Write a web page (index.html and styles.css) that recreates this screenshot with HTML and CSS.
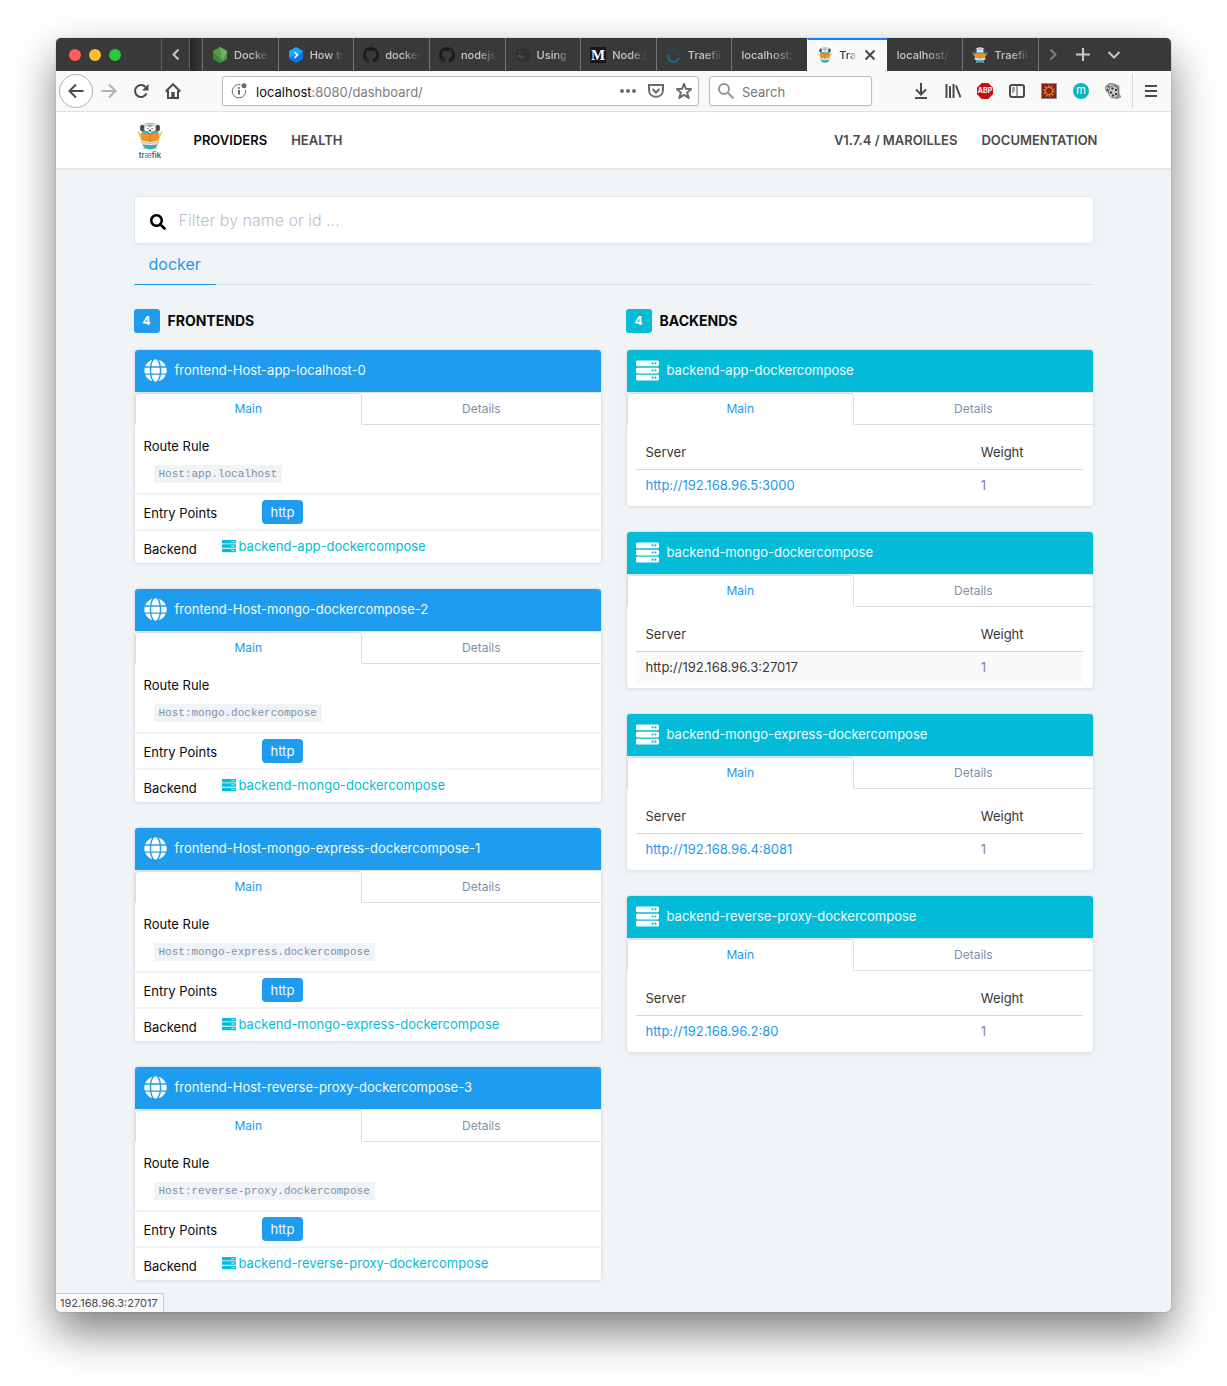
FILE: index.html
```html
<!DOCTYPE html>
<html lang="en">
<head>
<meta charset="utf-8">
<title>Traefik</title>
<link rel="stylesheet" href="styles.css">
</head>
<body>
<svg class="sprite" aria-hidden="true">
  <symbol id="globe" viewBox="0 0 496 512"><path d="M336.500 160C322 70.700 287.800 8 248 8s-74 62.700-88.500 152h177zM152 256c0 22.200 1.200 43.500 3.300 64h185.300c2.100-20.500 3.300-41.800 3.300-64s-1.200-43.500-3.300-64H155.300c-2.100 20.500-3.300 41.800-3.300 64zm324.700-96c-28.600-67.900-86.500-120.400-158-141.600 24.400 33.800 41.200 84.700 50 141.600h108zM177.200 18.400C105.800 39.600 47.800 92.100 19.300 160h108c8.700-56.900 25.500-107.800 49.900-141.600zM487.400 192H372.700c2.100 21 3.300 42.500 3.300 64s-1.200 43-3.300 64h114.600c5.500-20.500 8.600-41.800 8.600-64s-3.100-43.500-8.500-64zM120 256c0-21.500 1.200-43 3.300-64H8.600C3.200 212.500 0 233.800 0 256s3.200 43.500 8.600 64h114.600c-2-21-3.200-42.500-3.200-64zm39.500 96c14.500 89.300 48.700 152 88.500 152s74-62.700 88.500-152h-177zm159.300 141.600c71.400-21.200 129.400-73.700 158-141.600h-108c-8.800 56.900-25.600 107.800-50 141.600zM19.300 352c28.600 67.900 86.500 120.400 158 141.600-24.400-33.800-41.200-84.700-50-141.600h-108z"/></symbol>
  <symbol id="server" viewBox="0 0 512 512"><path fill-rule="evenodd" d="M32 32h448a32 32 0 0 1 32 32v64a32 32 0 0 1-32 32H32a32 32 0 0 1-32-32V64a32 32 0 0 1 32-32zM32 192h448a32 32 0 0 1 32 32v64a32 32 0 0 1-32 32H32a32 32 0 0 1-32-32v-64a32 32 0 0 1 32-32zM32 352h448a32 32 0 0 1 32 32v64a32 32 0 0 1-32 32H32a32 32 0 0 1-32-32v-64a32 32 0 0 1 32-32zM432 72a24 24 0 1 0 0 48 24 24 0 0 0 0-48zM368 72a24 24 0 1 0 0 48 24 24 0 0 0 0-48zM432 232a24 24 0 1 0 0 48 24 24 0 0 0 0-48zM368 232a24 24 0 1 0 0 48 24 24 0 0 0 0-48zM432 392a24 24 0 1 0 0 48 24 24 0 0 0 0-48zM368 392a24 24 0 1 0 0 48 24 24 0 0 0 0-48z"/></symbol>
  <symbol id="find" viewBox="0 0 512 512"><path d="M505 442.700L405.300 343c-4.500-4.500-10.600-7-17-7H372c27.600-35.300 44-79.700 44-128C416 93.100 322.900 0 208 0S0 93.100 0 208s93.100 208 208 208c48.300 0 92.700-16.400 128-44v16.300c0 6.400 2.500 12.500 7 17l99.700 99.700c9.400 9.400 24.600 9.400 33.900 0l28.300-28.300c9.400-9.400 9.400-24.600.1-34zM208 336c-70.700 0-128-57.200-128-128 0-70.700 57.200-128 128-128 70.700 0 128 57.200 128 128 0 70.700-57.200 128-128 128z"/></symbol>
  <symbol id="github" viewBox="0 0 16 16"><path fill="#1b1c1d" d="M8 0C3.580 0 0 3.580 0 8c0 3.540 2.290 6.530 5.470 7.590.4.070.55-.17.55-.38 0-.19-.01-.82-.01-1.490-2.010.37-2.530-.49-2.690-.94-.09-.23-.48-.94-.82-1.130-.28-.15-.68-.52-.01-.53.63-.01 1.080.58 1.230.82.72 1.210 1.870.87 2.330.66.070-.52.280-.87.510-1.070-1.780-.2-3.640-.89-3.640-3.950 0-.87.310-1.590.820-2.150-.08-.2-.36-1.020.08-2.120 0 0 .67-.21 2.200.82.64-.18 1.320-.27 2-.27.680 0 1.360.09 2 .27 1.530-1.040 2.200-.82 2.200-.82.440 1.100.160 1.920.080 2.120.51.56.82 1.270.82 2.150 0 3.070-1.870 3.750-3.650 3.950.29.25.54.73.54 1.480 0 1.070-.01 1.930-.01 2.200 0 .21.150.46.550.38A8.013 8.013 0 0 0 16 8c0-4.420-3.580-8-8-8z"/></symbol>
  <symbol id="mascot" viewBox="0 0 28 30">
    <path d="M6 17 2 12M22 17l4-5" stroke="#eda35c" stroke-width="1.500" fill="none"/>
    <path d="M.8 9.500l3.400 8M27.200 9.500l-3.400 8" stroke="#dcdc50" stroke-width="1.200" fill="none"/>
    <path d="M7 29.500l3-3M21 29.500l-3-3" stroke="#f3c9a0" stroke-width="2"/>
    <path d="M5.500 10C5.500 3 9.500 1 14 1s8.500 2 8.500 9v12c0 5-4 7.500-8.500 7.500S5.500 27 5.500 22z" fill="#37abc8"/>
    <path d="M6 4C8 .2 20 .2 22 4L20 5C18 2.500 10 2.500 8 5z" fill="#e9e9e9" stroke="#8b8b8b" stroke-width=".5"/>
    <ellipse cx="5.500" cy="6.500" rx="2.200" ry="3.500" fill="#4d4447"/><ellipse cx="22.500" cy="6.500" rx="2.200" ry="3.500" fill="#4d4447"/>
    <path d="M7.300 5v4.500M20.700 5v4.500" stroke="#a43f45"/>
    <circle cx="10.900" cy="7" r="3" fill="#fff"/><circle cx="17.100" cy="7" r="3" fill="#fff"/>
    <circle cx="11.800" cy="7" r=".6"/><circle cx="16.200" cy="7" r=".6"/>
    <ellipse cx="14" cy="10.400" rx="1.800" ry="1.500" fill="#f5ddbf"/><ellipse cx="14" cy="9.200" rx="1.200" ry=".8" fill="#222"/>
    <path d="M4.500 11.500 14 13.500l9.500-2v8.500L14 21.500 4.500 20z" fill="#f3921f"/><path d="M14 13.500v8" stroke="#b9691b" stroke-width=".7"/>
    <path d="M4 19.500 14 21.500l10-2v4.500l-10 1-10-1z" fill="#f1dfcb"/><path d="M4.500 21.800l9.500 1.400 9.500-1.400" stroke="#c9ad8f" stroke-width=".7" fill="none"/>
  </symbol>
</svg>

<div class="window">
  <header class="tabbar">
    <div class="lights"><i class="light red"></i><i class="light amber"></i><i class="light green"></i></div>
    <button class="scroll-left" aria-label="Scroll tabs left"><svg class="glyph16" viewBox="0 0 16 16"><path d="M10.500 2.500 5.500 7.500l5 5"/></svg></button>
    <div class="overflow-shade"></div>
    <nav class="tabs" aria-label="Browser tabs">
      <button class="tab"><svg class="fav" viewBox="0 0 16 16"><path d="M8 0l7 4v8l-7 4-7-4V4z" fill="#539e43"/><path d="M8 0l7 4-5 10z" fill="#76ac64"/><path d="M1 4l9 10-2 2-7-4z" fill="#3e863d"/></svg><span class="title">Docker</span></button>
      <button class="tab"><svg class="fav" viewBox="0 0 16 16"><path d="M8 0l7 4v8l-7 4-7-4V4z" fill="#0c75e8"/><path d="M1 4l7-4 7 4-4 4-10 2z" fill="#18a9f5"/><path d="M6.500 5l3 3-3 3" stroke="#fff" stroke-width="1.500" fill="none"/></svg><span class="title">How to</span></button>
      <button class="tab"><svg class="fav"><use href="#github"/></svg><span class="title">docker</span></button>
      <button class="tab"><svg class="fav"><use href="#github"/></svg><span class="title">nodejs</span></button>
      <button class="tab"><svg class="fav" viewBox="0 0 16 16"><circle cx="8" cy="8" r="7.500" fill="#2f3032"/><path d="M2 9c3-4 5 1 7 1s1-1 2-1c-2 3-6 3-9 0z" fill="#4b4d4f"/><circle cx="5" cy="5" r="1" fill="#4b4d4f"/></svg><span class="title">Using</span></button>
      <button class="tab"><span class="fav medium">M</span><span class="title">Node.j</span></button>
      <button class="tab"><svg class="fav" viewBox="0 0 16 16"><path d="M2.500 7c-1 10 9 10 10 4" stroke="#176f9c" stroke-width="1.700" fill="none"/><path d="M5 3v2M7 0v3M12 6v3" stroke="#175672" stroke-width="1.200"/></svg><span class="title">Traefik</span></button>
      <button class="tab"><span class="title">localhost:3</span></button>
      <button class="tab active"><svg class="fav"><use href="#mascot"/></svg><span class="title">Tra</span><svg class="close" viewBox="0 0 12 12"><path d="M1.500 1.500l9 9M10.500 1.500l-9 9"/></svg></button>
      <button class="tab"><span class="title">localhost/</span></button>
      <button class="tab"><svg class="fav"><use href="#mascot"/></svg><span class="title">Traefik</span></button>
    </nav>
    <div class="tab-tools">
      <button class="dim" aria-label="Scroll tabs right"><svg class="glyph16" viewBox="0 0 16 16"><path d="M5.500 2.500l5 5-5 5"/></svg></button>
      <button aria-label="New tab"><svg class="glyph16" viewBox="0 0 16 16"><path d="M8 1v13M1 7.500h14"/></svg></button>
      <button aria-label="List all tabs"><svg class="glyph16" viewBox="0 0 16 16"><path d="M2.500 5 8 10.500 13.500 5"/></svg></button>
    </div>
  </header>

  <div class="toolbar">
    <button class="tool back" aria-label="Back"><svg class="glyph16" viewBox="0 0 16 16"><path d="M15.500 8H1.500M8 1.500 1.500 8 8 14.500"/></svg></button>
    <button class="tool forward" aria-label="Forward"><svg class="glyph16" viewBox="0 0 16 16"><path d="M.5 8h14M8 1.500 14.500 8 8 14.500"/></svg></button>
    <button class="tool" aria-label="Reload"><svg class="glyph16" viewBox="0 0 16 16"><path d="M13.500 10.500A6 6 0 1 1 12.500 4"/><path class="solid" d="M15.500 1v6.500H9z"/></svg></button>
    <button class="tool" aria-label="Home"><svg class="glyph16" viewBox="0 0 16 16"><path d="M.7 8.500 8 1.300l7.300 7.200M3 7.500V15h10V7.500"/><path class="solid" d="M6.300 9h3.400v5.500H6.300z"/></svg></button>
    <div class="urlbar">
      <svg class="glyph16 info" viewBox="0 0 16 16"><path d="M9.500 1.700A6.700 6.700 0 1 0 14.500 7"/><path class="stem" d="M8 7v4.500M8 4.200v1.500"/><circle cx="13" cy="2.800" r="2.500"/></svg>
      <div class="address" role="textbox" contenteditable="true" spellcheck="false" aria-label="Address"><span class="domain">localhost</span>:8080/dashboard/</div>
      <button class="tool" aria-label="Page actions"><svg class="glyph16" viewBox="0 0 16 16"><g class="solid"><circle cx="2" cy="8" r="2"/><circle cx="8" cy="8" r="2"/><circle cx="14" cy="8" r="2"/></g></svg></button>
      <button class="tool" aria-label="Save to Pocket"><svg class="glyph16" viewBox="0 0 16 16"><path d="M1 2h14v5c0 9-14 9-14 0zM4.500 6 8 9.500 11.500 6"/></svg></button>
      <button class="tool" aria-label="Bookmark"><svg class="glyph16" viewBox="0 0 16 16"><path d="M8 1l2 4.800 5.200.4-4 3.400 1.300 5.100L8 12l-4.500 2.700 1.300-5.100-4-3.400L6 5.800z"/></svg></button>
    </div>
    <label class="searchbar"><svg class="glyph16" viewBox="0 0 16 16"><circle cx="6" cy="6" r="5"/><path d="M9.800 9.800l5.700 5.700"/></svg><input type="text" placeholder="Search" aria-label="Web search"></label>
    <div class="extensions">
      <button class="tool" aria-label="Downloads"><svg class="glyph16" viewBox="0 0 16 16"><path d="M8 0v11M3 6.500l5 5 5-5M2 15h12"/></svg></button>
      <button class="tool" aria-label="Library"><svg class="glyph16" viewBox="0 0 16 16"><path d="M1.500 1v14M5 3v12M8.500 1v14M11 2.500l4.500 12"/></svg></button>
      <button class="tool" aria-label="Adblock Plus"><span class="abp">ABP</span></button>
      <button class="tool" aria-label="Sidebar"><svg class="glyph16" viewBox="0 0 16 16"><rect x="1" y="2" width="14" height="12" rx="2"/><path class="thin" d="M8 2v12M3 5h3M3 7h3M3 9h2"/></svg></button>
      <button class="tool" aria-label="Settings extension"><svg class="pic" viewBox="0 0 16 16"><path fill="#8c1f12" stroke="#8f8f8f" d="M.5.5h15v15H.5z"/><circle cx="8" cy="8" r="3.600" fill="none" stroke="#d58b23" stroke-width="1.300"/><circle cx="8" cy="8" r="5.100" fill="none" stroke="#d58b23" stroke-width="2" stroke-dasharray="1.200 2"/></svg></button>
      <button class="tool" aria-label="Momentum"><span class="round">m</span></button>
      <button class="tool" aria-label="Video downloader"><svg class="pic" viewBox="0 0 16 16"><path d="M9 1l5 2v8l2 3-5 2z" fill="#999" stroke="#666" stroke-width=".6"/><ellipse cx="6" cy="5.500" rx="5.500" ry="5" fill="#bbb" stroke="#555" stroke-width=".7"/><ellipse cx="8.500" cy="9" rx="5" ry="6" fill="#d0d0d0" stroke="#555" stroke-width=".7"/><g fill="#3c3c3c"><circle cx="3.500" cy="3.700" r="1"/><circle cx="2.600" cy="7" r="1"/><circle cx="7.500" cy="5.600" r="1.200"/><circle cx="11" cy="7" r="1.200"/><circle cx="6" cy="9.500" r="1.200"/><circle cx="11" cy="11" r="1.200"/><circle cx="8" cy="12.500" r="1.200"/></g></svg></button>
    </div>
    <button class="tool menu" aria-label="Menu"><svg class="glyph16" viewBox="0 0 16 16"><path d="M2 3h12M2 8h12M2 13h12"/></svg></button>
  </div>

  <div class="page">
    <header class="site-header">
      <div class="site-nav">
        <a class="logo" href="#" aria-label="Traefik"><svg viewBox="0 0 28 40" width="28" height="40"><use href="#mascot" x="1" y="1" width="26" height="30"/><text x="14" y="38" text-anchor="middle" class="logo-text">tr<tspan class="ae">æ</tspan>fik</text></svg></a>
        <nav class="links"><a class="current" href="#">PROVIDERS</a><a href="#">HEALTH</a></nav>
        <nav class="links right"><a href="#">V1.7.4 / MAROILLES</a><a href="#">DOCUMENTATION</a></nav>
      </div>
    </header>

    <main class="content">
      <label class="filter"><svg class="filter-icon"><use href="#find"/></svg><input type="text" placeholder="Filter by name or id ..." aria-label="Filter"></label>
      <nav class="providers"><a href="#">docker</a></nav>
      <div class="columns">
        <section class="column frontends">
          <h2><span class="count">4</span>FRONTENDS</h2>
          <article class="card">
            <h3><svg class="card-icon"><use href="#globe"/></svg>frontend-Host-app-localhost-0</h3>
            <div class="card-tabs"><button class="on">Main</button><button>Details</button></div>
            <div class="rule"><span>Route Rule</span><code>Host:app.localhost</code></div>
            <div class="entry"><span>Entry Points</span><b class="tag">http</b></div>
            <div class="target"><span>Backend</span><a href="#b0"><svg><use href="#server"/></svg>backend-app-dockercompose</a></div>
          </article>
          <article class="card">
            <h3><svg class="card-icon"><use href="#globe"/></svg>frontend-Host-mongo-dockercompose-2</h3>
            <div class="card-tabs"><button class="on">Main</button><button>Details</button></div>
            <div class="rule"><span>Route Rule</span><code>Host:mongo.dockercompose</code></div>
            <div class="entry"><span>Entry Points</span><b class="tag">http</b></div>
            <div class="target"><span>Backend</span><a href="#b1"><svg><use href="#server"/></svg>backend-mongo-dockercompose</a></div>
          </article>
          <article class="card">
            <h3><svg class="card-icon"><use href="#globe"/></svg>frontend-Host-mongo-express-dockercompose-1</h3>
            <div class="card-tabs"><button class="on">Main</button><button>Details</button></div>
            <div class="rule"><span>Route Rule</span><code>Host:mongo-express.dockercompose</code></div>
            <div class="entry"><span>Entry Points</span><b class="tag">http</b></div>
            <div class="target"><span>Backend</span><a href="#b2"><svg><use href="#server"/></svg>backend-mongo-express-dockercompose</a></div>
          </article>
          <article class="card">
            <h3><svg class="card-icon"><use href="#globe"/></svg>frontend-Host-reverse-proxy-dockercompose-3</h3>
            <div class="card-tabs"><button class="on">Main</button><button>Details</button></div>
            <div class="rule"><span>Route Rule</span><code>Host:reverse-proxy.dockercompose</code></div>
            <div class="entry"><span>Entry Points</span><b class="tag">http</b></div>
            <div class="target"><span>Backend</span><a href="#b3"><svg><use href="#server"/></svg>backend-reverse-proxy-dockercompose</a></div>
          </article>
        </section>
        <section class="column backends">
          <h2><span class="count">4</span>BACKENDS</h2>
          <article class="card" id="b0">
            <h3><svg class="card-icon"><use href="#server"/></svg>backend-app-dockercompose</h3>
            <div class="card-tabs"><button class="on">Main</button><button>Details</button></div>
            <table><thead><tr><th>Server</th><th>Weight</th></tr></thead><tbody><tr><td><a href="#">http://192.168.96.5:3000</a></td><td>1</td></tr></tbody></table>
          </article>
          <article class="card" id="b1">
            <h3><svg class="card-icon"><use href="#server"/></svg>backend-mongo-dockercompose</h3>
            <div class="card-tabs"><button class="on">Main</button><button>Details</button></div>
            <table><thead><tr><th>Server</th><th>Weight</th></tr></thead><tbody><tr class="hovered"><td><a href="#">http://192.168.96.3:27017</a></td><td>1</td></tr></tbody></table>
          </article>
          <article class="card" id="b2">
            <h3><svg class="card-icon"><use href="#server"/></svg>backend-mongo-express-dockercompose</h3>
            <div class="card-tabs"><button class="on">Main</button><button>Details</button></div>
            <table><thead><tr><th>Server</th><th>Weight</th></tr></thead><tbody><tr><td><a href="#">http://192.168.96.4:8081</a></td><td>1</td></tr></tbody></table>
          </article>
          <article class="card" id="b3">
            <h3><svg class="card-icon"><use href="#server"/></svg>backend-reverse-proxy-dockercompose</h3>
            <div class="card-tabs"><button class="on">Main</button><button>Details</button></div>
            <table><thead><tr><th>Server</th><th>Weight</th></tr></thead><tbody><tr><td><a href="#">http://192.168.96.2:80</a></td><td>1</td></tr></tbody></table>
          </article>
        </section>
      </div>
    </main>
  </div>
  <div class="status">192.168.96.3:27017</div>
</div>
</body>
</html>
```

FILE: styles.css
```css
* { box-sizing: border-box; }
body { margin: 0; padding: 38px 56px 74px; background: #fff; color: #0a0a0a; font: 13px/20px Inter, "Liberation Sans", sans-serif; }
button { margin: 0; padding: 0; border: 0; background: none; color: inherit; font: inherit; }
input { min-width: 0; border: 0; outline: 0; padding: 0; background: none; font: inherit; }
a { color: inherit; text-decoration: none; }
svg { display: block; flex: none; }
.sprite { position: absolute; width: 0; height: 0; }

.window { position: relative; border-radius: 5px; background: #f0f4f7; box-shadow: 0 0 1px rgba(0,0,0,.6), 0 20px 44px rgba(0,0,0,.5); }

/* Browser tab strip */
.tabbar { display: flex; height: 33px; border-radius: 5px 5px 0 0; background: #38393b; color: #c9c9ca; overflow: hidden; }
.lights { display: flex; align-items: center; gap: 8px; width: 105px; padding-left: 13px; }
.light { width: 12px; height: 12px; border-radius: 50%; }
.red { background: #ff5f57; }
.amber { background: #ffbd2e; }
.green { background: #28c940; }
.scroll-left { display: grid; place-items: center; width: 29px; border: solid #606163; border-width: 0 1px; }
.overflow-shade { width: 12px; background: linear-gradient(90deg, #242526, #38393b); }
.tabs { display: flex; flex: 1; min-width: 0; border-right: 1px solid #737475; }
.tab { display: flex; align-items: center; gap: 6px; flex: 1 1 0; min-width: 0; padding: 0 7px 0 9px; border-left: 1px solid #737475; font-size: 11px; font-weight: 500; }
.fav { flex: none; width: 16px; height: 16px; }
.medium { background: #151617; color: #fff; font: bold 15px/16px "Liberation Serif", serif; text-align: center; }
.title { flex: 1; min-width: 0; overflow: hidden; white-space: nowrap; text-align: left; -webkit-mask-image: linear-gradient(90deg, #000 50%, transparent 95%); mask-image: linear-gradient(90deg, #000 50%, transparent 95%); }
.tab.active { padding: 0 11px 2px 9px; border-left-color: #f9f9fa; border-top: 2px solid #0a84ff; background: #f9f9fa; color: #333; }
.tab.active + .tab { border-left-color: #38393b; }
.close { width: 12px; height: 12px; fill: none; stroke: #4a4a4c; stroke-width: 2; }
.tab-tools { display: flex; align-items: center; width: 132px; }
.tab-tools button { display: grid; place-items: center; width: 31px; }
.tab-tools .dim { width: 28px; opacity: .5; }
.glyph16 { width: 16px; height: 16px; fill: none; stroke: currentColor; stroke-width: 2; }
.solid { fill: currentColor; stroke: none; }
.thin { stroke-width: 1; }

/* Browser toolbar */
.toolbar { display: flex; align-items: center; height: 41px; padding: 0 3px; border-bottom: 1px solid #e0e0e1; background: #f9f9fa; color: #4a4a4c; }
.tool { display: grid; place-items: center; flex: none; width: 32px; height: 32px; }
.back { width: 34px; height: 34px; border: 1px solid #b1b1b3; border-radius: 50%; background: #fff; }
.forward { opacity: .4; }
.urlbar, .searchbar { display: flex; align-items: center; height: 30px; border: 1px solid #bdbdbf; border-radius: 3px; background: #fff; box-shadow: 0 1px 3px rgba(0,0,0,.06); }
.urlbar { flex: 1; min-width: 0; margin-left: 33px; color: #6a6a6c; }
.urlbar .tool { width: 28px; height: 28px; }
.urlbar .glyph16 { flex: none; }
.info { margin: 0 9px 0 8px; stroke-width: 1; }
.info circle { fill: currentColor; stroke: none; }
.stem { stroke-width: 2; }
.address { flex: 1; min-width: 0; padding-top: 2px; white-space: nowrap; overflow: hidden; outline: 0; color: #7d7d7f; }
.domain { color: #0c0c0d; }
.searchbar { gap: 8px; flex: none; width: 163px; margin-left: 10px; padding: 0 8px; color: #959597; }
.searchbar input { width: 100%; padding-top: 2px; }
.searchbar input::placeholder { color: #757577; opacity: 1; }
.extensions { display: flex; margin-left: 33px; padding-right: 3px; }
.pic { width: 16px; height: 16px; }
.abp, .round { width: 16px; height: 16px; color: #fff; text-align: center; }
.abp { clip-path: polygon(30% 0, 70% 0, 100% 30%, 100% 70%, 70% 100%, 30% 100%, 0 70%, 0 30%); background: #c70d12; font-size: 7px; font-weight: 700; line-height: 16px; }
.round { border-radius: 50%; background: #0bb5b9; font-size: 11px; line-height: 15px; }
.menu { width: 36px; height: 34px; border-left: 1px solid #d7d7db; }

/* Dashboard header */
.site-header { height: 57px; border-bottom: 1px solid #dfe3e6; background: #fff; box-shadow: 0 1px 3px rgba(0,0,0,.04); }
.site-nav { display: flex; align-items: center; gap: 30px; max-width: 968px; height: 56px; margin: 0 auto; padding-left: 6px; }
.logo-text { font-size: 8px; font-weight: 500; fill: #47474a; }
.ae { fill: #37abc8; }
.links { display: flex; gap: 24px; color: #4a4a4a; font-weight: 600; }
.links .current { color: #0a0a0a; }
.links.right { margin-left: auto; }

/* Dashboard body */
.content { max-width: 960px; margin: 0 auto; padding: 27px 0 31px; }
.filter { display: flex; align-items: center; gap: 13px; height: 48px; padding: 0 15px; border: 1px solid #e1e8ed; border-radius: 4px; background: #fff; box-shadow: 0 1px 4px rgba(0,0,0,.05); }
.filter-icon { width: 16px; height: 16px; margin-top: 3px; }
.filter input { flex: 1; font-size: 16px; font-weight: 300; }
.filter input::placeholder { color: #b9c0cb; opacity: 1; }
.providers { display: flex; border-bottom: 1px solid #d9dee2; }
.providers a { height: 41px; margin-bottom: -1px; padding: 0 15px; border-bottom: 1px solid #1c98f2; color: #1c98f2; font-size: 16px; line-height: 40px; }
.columns { display: grid; grid-template-columns: 1fr 1fr; gap: 24px; margin-top: 24px; }
.column { display: flex; flex-direction: column; gap: 24px; min-width: 0; }
h2 { display: flex; align-items: center; gap: 8px; height: 24px; margin: 0 0 -8px; font-size: 14px; font-weight: 700; }
.count { width: 26px; border-radius: 3px; color: #fff; font-size: 12px; line-height: 24px; text-align: center; }
.frontends .count, .frontends h3, .tag { background: #209cee; }
.backends .count, .backends h3 { background: #04bcd8; }
.card { border: 1px solid #dfe3e7; border-radius: 4px; background: #fff; box-shadow: 0 1px 4px rgba(0,0,0,.06); overflow: hidden; }
h3 { display: flex; align-items: center; gap: 8px; height: 42px; margin: 0; padding: 0 9px 3px; color: #eefaff; font-size: 13px; font-weight: 400; }
.card-icon { width: 23px; height: 23px; margin-top: 2px; fill: #fff; }
.card-tabs { display: flex; height: 33px; border-top: 1px solid #e3e6e9; }
.card-tabs button { flex: 1 1 auto; border: 1px solid transparent; border-bottom-color: #dbdee1; color: #8090aa; font-size: 12px; line-height: 30px; }
.card-tabs .on { border-color: #dbdee1 #dbdee1 transparent; border-radius: 4px 4px 0 0; color: #1c98f2; }
.rule { display: flex; flex-direction: column; align-items: flex-start; gap: 9px; height: 68px; padding: 11px 9px 0; }
code { margin-left: 10px; padding: 0 5px; background: #f0f4f7; color: #8090aa; font: 11px/18px "Liberation Mono", monospace; }
.entry, .target { display: grid; border-top: 2px solid #f0f4f7; padding: 0 9px; }
.entry { grid-template-columns: 118px 1fr; align-items: center; height: 36px; }
.entry span { padding-top: 2px; }
.tag { justify-self: start; padding: 0 9px; border-radius: 4px; color: #eefaff; font-weight: 400; line-height: 24px; }
.target { grid-template-columns: 78px 1fr; align-items: start; height: 34px; }
.target span { padding-top: 8px; }
.target a { display: flex; align-items: center; gap: 3px; padding-top: 5px; color: #04bcd8; }
.target svg { width: 14px; height: 14px; fill: currentColor; }
table { width: calc(100% - 19px); margin: 11px 10px 5px 9px; border-collapse: collapse; table-layout: fixed; }
th, td { height: 32px; padding: 0 10px; text-align: left; font-weight: 400; }
th { width: 25%; height: 33px; border-bottom: 1px solid #d5d7da; color: #363636; }
th:first-child { width: 75%; }
td { color: #7689a8; }
td a { color: #1c98f2; }
.hovered { background: #fafafa; }
.hovered a { color: #363636; }

/* Link preview, drawn over the page's corner */
.status { position: absolute; left: 0; bottom: 0; padding: 0 5px 0 4px; border: solid #cdcdcf; border-width: 1px 1px 0 0; border-bottom-left-radius: 5px; background: #f9f9fa; color: #4a4a4c; font-size: 11px; line-height: 18px; }
```
